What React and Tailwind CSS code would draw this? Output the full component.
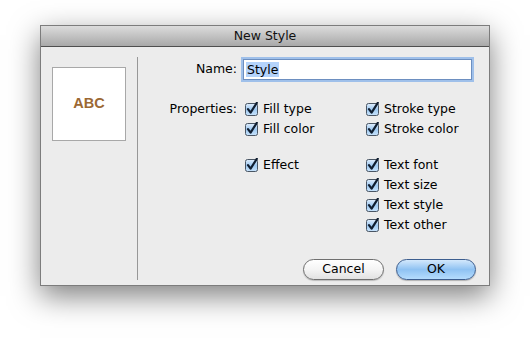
import React from 'react';

function Check() {
  return (
    <svg width="14" height="14" viewBox="0 0 14 14" className="shrink-0">
      <defs>
        <linearGradient id="cbg" x1="0" y1="0" x2="0" y2="1">
          <stop offset="0" stopColor="#e0eefc" />
          <stop offset="0.5" stopColor="#9fc9f1" />
          <stop offset="1" stopColor="#c8e3fb" />
        </linearGradient>
      </defs>
      <rect x="0.5" y="1.5" width="12" height="12" rx="2" fill="url(#cbg)" stroke="#4a5664" />
      <path d="M3 7.2 L5.6 10.6 L11.8 0.8" fill="none" stroke="#101e30" strokeWidth="2.2" strokeLinecap="round" strokeLinejoin="round" />
    </svg>
  );
}

function Box({ label }) {
  return (
    <div className="flex h-[20px] items-center gap-[4px]">
      <Check />
      <span>{label}</span>
    </div>
  );
}

export default function App() {
  const rows = [
    ['Fill type', 'Stroke type'],
    ['Fill color', 'Stroke color'],
  ];
  const textRows = ['Text font', 'Text size', 'Text style', 'Text other'];

  return (
    <div className="h-[341px] w-[530px] bg-white pl-[40px] pt-[25px] font-['DejaVu_Sans',sans-serif] text-[12.5px] text-black">
      <div className="flex h-[261px] w-[450px] flex-col border border-[#7c7c7c] bg-[#ececec] shadow-[0_10px_28px_rgba(0,0,0,0.5)]">
        {/* title bar */}
        <div className="flex h-[21px] shrink-0 items-center justify-center border-b border-[#4f4f4f] bg-gradient-to-b from-[#dcdcdc] to-[#a9a9a9] pt-px text-[12.5px] text-[#111]">
          New Style
        </div>

        <div className="flex flex-1">
          {/* preview */}
          <div className="w-[96px] shrink-0 pl-[11px] pt-[20px]">
            <div className="flex h-[74px] w-[74px] items-center justify-center border border-[#a8a8a8] bg-white font-['Liberation_Sans',sans-serif] text-[14.5px] font-bold text-[#9c6833]">
              ABC
            </div>
          </div>
          <div className="mb-[5px] mt-[10px] w-px bg-[#979797]" />

          {/* form */}
          <div className="flex flex-1 flex-col pb-[5px]">
            <div className="mt-[12px] flex h-[21px] items-center">
              <div className="w-[99px] text-right">Name:</div>
              <div className="ml-[6px] flex h-[21px] w-[229px] items-center border border-[#6d8fc0] bg-white pl-[2px] shadow-[0_0_0_2px_#9fc0ea]">
                <span className="bg-[#b4d3fb] px-px leading-[15px]">Style</span>
              </div>
            </div>

            <div className="mt-[19px] flex">
              <div className="flex h-[20px] w-[99px] items-center justify-end">Properties:</div>
              <div className="ml-[8px] flex flex-col">
                {rows.map((r) => (
                  <div key={r[0]} className="flex">
                    <div className="w-[121px]"><Box label={r[0]} /></div>
                    <Box label={r[1]} />
                  </div>
                ))}
                <div className="mt-[16px] flex">
                  <div className="w-[121px]"><Box label="Effect" /></div>
                  <div className="flex flex-col">
                    {textRows.map((t) => (
                      <Box key={t} label={t} />
                    ))}
                  </div>
                </div>
              </div>
            </div>

            <div className="mt-auto flex justify-end gap-[12px] pr-[13px]">
              <button className="h-[21px] w-[81px] rounded-full border border-[#6f6f6f] bg-gradient-to-b from-white via-[#f4f4f4] to-[#e2e2e2] text-[12.5px] leading-none text-black shadow-[0_1px_1px_rgba(0,0,0,0.2)]">
                Cancel
              </button>
              <button className="h-[21px] w-[80px] rounded-full border border-[#3d5e8f] bg-gradient-to-b from-[#d3e8fc] via-[#8fc2f2] to-[#b5dcfd] text-[12.5px] leading-none text-black shadow-[0_1px_1px_rgba(0,0,0,0.25)]">
                OK
              </button>
            </div>
          </div>
        </div>
      </div>
    </div>
  );
}
